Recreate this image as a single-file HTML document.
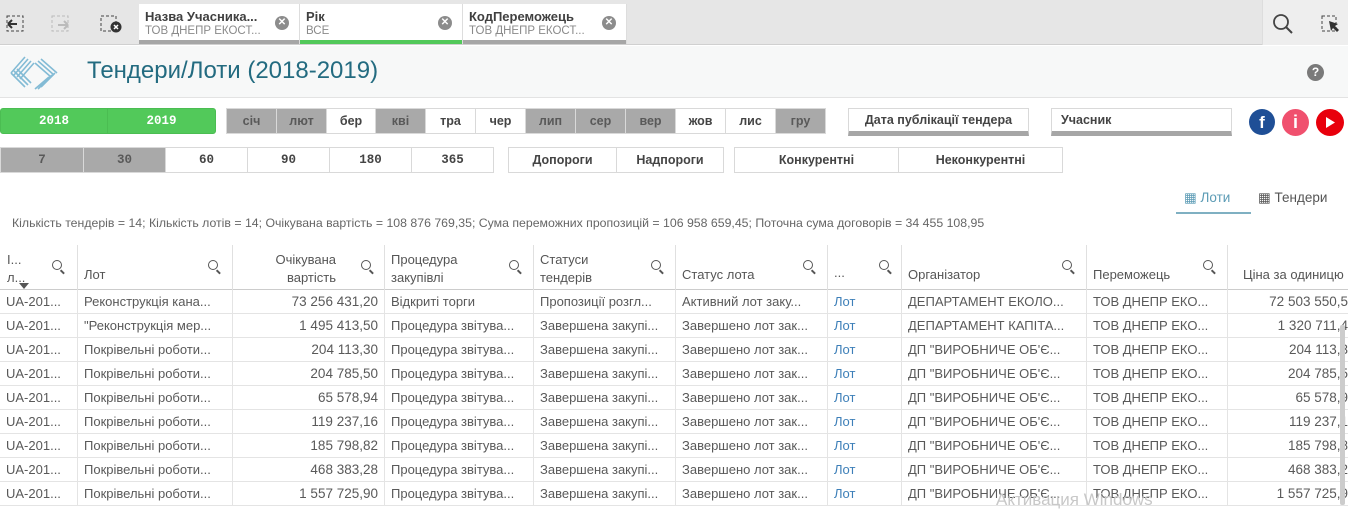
<!DOCTYPE html>
<html><head><meta charset="utf-8">
<style>
*{box-sizing:border-box;margin:0;padding:0}
body{width:1348px;height:505px;overflow:hidden;background:#fff;font-family:"Liberation Sans",sans-serif;color:#595959;position:relative}
.abs{position:absolute}
.top{left:0;top:0;width:1348px;height:45px;background:#e6e6e6;border-bottom:1px solid #d0d0d0}
.tab{top:4px;height:40px;background:#fff;border-right:1px solid #ddd;padding:5px 0 0 6px}
.tab b{display:block;font-size:13px;color:#404040}
.tab span{display:block;font-size:11.5px;color:#8a8a8a;margin-top:1px}
.tab .x{position:absolute;right:10px;top:12px;width:14px;height:14px;border-radius:50%;background:#8c8c8c;color:#fff;font-size:10px;line-height:14px;text-align:center;font-weight:bold}
.tab .bar{position:absolute;left:0;right:0;bottom:0;height:4px;background:#a6a6a6}
.titlebar{left:0;top:46px;width:1348px;height:52px;background:#f7f8f8;border-bottom:1px solid #e3e3e3}
.btn{position:absolute;font-size:12.5px;font-weight:bold;text-align:center;color:#444;border:1px solid #d9d9d9;background:#fff}
.g{background:#a9a9a9;color:#595959}
.grn{background:#52c95a;color:#fff;border-color:#4bbd52}
.mono{font-family:"Liberation Mono",monospace}
.hd{position:absolute;top:245px;height:45px;border-left:1px solid #e0e0e0;font-size:13px;color:#555}
.row{position:absolute;left:0;width:1348px;height:24px;border-bottom:1px solid #e4e4e4;font-size:13px}
.c{position:absolute;top:0;height:24px;line-height:23px;white-space:nowrap;overflow:hidden;padding-left:6px;border-left:1px solid #e4e4e4}
.r{text-align:right;padding-right:6px;font-size:13.5px}
.lnk{color:#3d7fb8}
.mag{position:absolute;width:10px;height:10px;border:1.6px solid #555;border-radius:50%}
.mag:after{content:"";position:absolute;width:5px;height:1.6px;background:#555;left:7px;top:10px;transform:rotate(45deg)}
</style></head><body>
<div class="abs top"></div>
<svg class="abs" style="left:5px;top:14px" width="22" height="20"><rect x="2" y="2" width="16" height="15" fill="none" stroke="#444" stroke-dasharray="3 2"/><path d="M3 10h9M3 10l4-4M3 10l4 4" stroke="#333" stroke-width="2" fill="none"/></svg>
<svg class="abs" style="left:50px;top:14px" width="22" height="20"><rect x="2" y="2" width="16" height="15" fill="none" stroke="#bbb" stroke-dasharray="3 2"/><path d="M8 11h10M18 11l-4-4M18 11l-4 4" stroke="#bbb" stroke-width="2" fill="none"/></svg>
<svg class="abs" style="left:99px;top:14px" width="24" height="20"><rect x="2" y="2" width="15" height="15" fill="none" stroke="#444" stroke-dasharray="3 2"/><circle cx="17" cy="13" r="5.5" fill="#333"/><path d="M15 11l4 4M19 11l-4 4" stroke="#fff" stroke-width="1.5"/></svg>
<div class="abs tab" style="left:139px;width:161px"><b>Назва Учасника...</b><span>ТОВ ДНЕПР ЕКОСТ...</span><div class="x">✕</div><div class="bar"></div></div>
<div class="abs tab" style="left:300px;width:163px"><b>Рік</b><span>ВСЕ</span><div class="x">✕</div><div class="bar" style="background:#52c95a"></div></div>
<div class="abs tab" style="left:463px;width:164px"><b>КодПереможець</b><span>ТОВ ДНЕПР ЕКОСТ...</span><div class="x">✕</div><div class="bar"></div></div>
<div class="abs" style="left:1262px;top:0;width:86px;height:45px;background:#eeeeee;border-left:1px solid #ddd"></div>
<svg class="abs" style="left:1272px;top:13px" width="22" height="22"><circle cx="9" cy="9" r="7" fill="none" stroke="#444" stroke-width="1.8"/><path d="M14 14l6 6" stroke="#444" stroke-width="2"/></svg>
<svg class="abs" style="left:1320px;top:14px" width="22" height="20"><rect x="2" y="2" width="14" height="15" fill="none" stroke="#444" stroke-dasharray="3 2"/><path d="M9 7l9 3-3 2 4 4-2 2-4-4-2 3z" fill="#333"/></svg>

<div class="abs titlebar"></div>
<svg class="abs" style="left:8px;top:53px" width="52" height="38">
<g stroke="#6fb1cf" stroke-width="1.6" fill="none" opacity=".85">
<path d="M3 20l14-16M6 22l14-16M9 24l14-16M12 26l14-16"/>
<path d="M3 20l14 14M6 18l14 14M9 16l14 14"/>
<path d="M30 8l16 14M33 6l16 14M27 10l16 14"/>
<path d="M44 22l-14 14M47 20l-14 14M41 24l-14 12"/></g></svg>
<div class="abs" style="left:87px;top:57px;font-size:24px;color:#236b80;font-family:'Liberation Sans',sans-serif">Тендери/Лоти (2018-2019)</div>
<div class="abs" style="left:1307px;top:64px;width:17px;height:17px;border-radius:50%;background:#7a7a7a;color:#fff;font-size:12px;font-weight:bold;text-align:center;line-height:17px">?</div>

<div class="btn grn mono" style="left:0;top:108px;width:108px;height:26px;line-height:24px;border-radius:3px 0 0 3px">2018</div>
<div class="btn grn mono" style="left:107px;top:108px;width:109px;height:26px;line-height:24px;border-radius:0 3px 3px 0">2019</div>
<div class="btn g" style="left:226px;top:108px;width:51px;height:26px;line-height:24px">січ</div>
<div class="btn g" style="left:276px;top:108px;width:51px;height:26px;line-height:24px">лют</div>
<div class="btn" style="left:326px;top:108px;width:50px;height:26px;line-height:24px">бер</div>
<div class="btn g" style="left:375px;top:108px;width:51px;height:26px;line-height:24px">кві</div>
<div class="btn" style="left:425px;top:108px;width:51px;height:26px;line-height:24px">тра</div>
<div class="btn" style="left:475px;top:108px;width:51px;height:26px;line-height:24px">чер</div>
<div class="btn g" style="left:525px;top:108px;width:51px;height:26px;line-height:24px">лип</div>
<div class="btn g" style="left:575px;top:108px;width:51px;height:26px;line-height:24px">сер</div>
<div class="btn g" style="left:625px;top:108px;width:51px;height:26px;line-height:24px">вер</div>
<div class="btn" style="left:675px;top:108px;width:51px;height:26px;line-height:24px">жов</div>
<div class="btn" style="left:725px;top:108px;width:51px;height:26px;line-height:24px">лис</div>
<div class="btn g" style="left:775px;top:108px;width:51px;height:26px;line-height:24px">гру</div>
<div class="btn" style="left:848px;top:108px;width:181px;height:28px;line-height:22px;border-bottom:5px solid #a6a6a6">Дата публікації тендера</div>
<div class="btn" style="left:1051px;top:108px;width:181px;height:28px;line-height:22px;text-align:left;padding-left:9px;border-bottom:5px solid #a6a6a6">Учасник</div>
<div class="abs" style="left:1249px;top:109px;width:26px;height:26px;border-radius:50%;background:#1f4f96;color:#fff;font-weight:bold;font-size:17px;text-align:center;line-height:27px">f</div>
<div class="abs" style="left:1282px;top:109px;width:27px;height:27px;border-radius:50%;background:#f0506e;color:#fff;font-weight:bold;font-size:18px;text-align:center;line-height:27px">i</div>
<div class="abs" style="left:1316px;top:109px;width:28px;height:27px;border-radius:50%;background:#e8000c"></div>
<svg class="abs" style="left:1325px;top:116px" width="12" height="13"><path d="M1 1l9 5.5-9 5.5z" fill="#fff"/></svg>

<div class="btn g mono" style="left:0;top:147px;width:84px;height:26px;line-height:24px">7</div>
<div class="btn g mono" style="left:83px;top:147px;width:83px;height:26px;line-height:24px">30</div>
<div class="btn mono" style="left:165px;top:147px;width:83px;height:26px;line-height:24px">60</div>
<div class="btn mono" style="left:247px;top:147px;width:83px;height:26px;line-height:24px">90</div>
<div class="btn mono" style="left:329px;top:147px;width:83px;height:26px;line-height:24px">180</div>
<div class="btn mono" style="left:411px;top:147px;width:83px;height:26px;line-height:24px">365</div>
<div class="btn" style="left:508px;top:147px;width:109px;height:26px;line-height:24px">Допороги</div>
<div class="btn" style="left:616px;top:147px;width:108px;height:26px;line-height:24px">Надпороги</div>
<div class="btn" style="left:734px;top:147px;width:165px;height:26px;line-height:24px">Конкурентні</div>
<div class="btn" style="left:898px;top:147px;width:165px;height:26px;line-height:24px">Неконкурентні</div>

<div class="abs" style="left:1176px;top:190px;width:75px;height:24px;border-bottom:2px solid #7fb0c2;font-size:13.5px;color:#5b9bb5;padding-left:8px">▦ Лоти</div>
<div class="abs" style="left:1258px;top:190px;font-size:13.5px;color:#555">▦ Тендери</div>
<div class="abs" style="left:12px;top:216px;font-size:12.3px;color:#666">Кількість тендерів = 14; Кількість лотів = 14; Очікувана вартість = 108 876 769,35; Сума переможних пропозицій = 106 958 659,45; Поточна сума договорів = 34 455 108,95</div>

<div class="abs" style="left:0;top:289px;width:1348px;height:1px;background:#ccc"></div>
<div class="hd" style="left:0;width:77px;border-left:none"><div style="position:absolute;left:7px;top:6px;line-height:18px">І...<br>л...</div><div class="mag" style="left:52px;top:15px"></div><div style="position:absolute;left:19px;top:38px;border:5px solid transparent;border-top:6px solid #555"></div></div>
<div class="hd" style="left:77px;width:155px"><div style="position:absolute;left:6px;top:22px">Лот</div><div class="mag" style="left:130px;top:15px"></div></div>
<div class="hd" style="left:232px;width:152px"><div style="position:absolute;right:48px;top:6px;line-height:18px;text-align:right">Очікувана<br>вартість</div><div class="mag" style="left:128px;top:15px"></div></div>
<div class="hd" style="left:384px;width:149px"><div style="position:absolute;left:6px;top:6px;line-height:18px">Процедура<br>закупівлі</div><div class="mag" style="left:124px;top:15px"></div></div>
<div class="hd" style="left:533px;width:142px"><div style="position:absolute;left:6px;top:6px;line-height:18px">Статуси<br>тендерів</div><div class="mag" style="left:117px;top:15px"></div></div>
<div class="hd" style="left:675px;width:152px"><div style="position:absolute;left:6px;top:22px">Статус лота</div><div class="mag" style="left:127px;top:15px"></div></div>
<div class="hd" style="left:827px;width:74px"><div style="position:absolute;left:6px;top:20px">...</div><div class="mag" style="left:51px;top:15px"></div></div>
<div class="hd" style="left:901px;width:185px"><div style="position:absolute;left:6px;top:22px">Організатор</div><div class="mag" style="left:160px;top:15px"></div></div>
<div class="hd" style="left:1086px;width:141px"><div style="position:absolute;left:6px;top:22px">Переможець</div><div class="mag" style="left:116px;top:15px"></div></div>
<div class="hd" style="left:1227px;width:121px"><div style="position:absolute;left:15px;top:22px;white-space:nowrap">Ціна за одиницю</div></div>

<div class="row" style="top:290px"><div class="c" style="left:0;width:77px;border:none">UA-201...</div><div class="c" style="left:77px;width:155px">Реконструкція кана...</div><div class="c r" style="left:232px;width:152px">73 256 431,20</div><div class="c" style="left:384px;width:149px">Відкриті торги</div><div class="c" style="left:533px;width:142px">Пропозиції розгл...</div><div class="c" style="left:675px;width:152px">Активний лот заку...</div><div class="c lnk" style="left:827px;width:74px">Лот</div><div class="c" style="left:901px;width:185px">ДЕПАРТАМЕНТ ЕКОЛО...</div><div class="c" style="left:1086px;width:141px">ТОВ ДНЕПР ЕКО...</div><div class="c r" style="left:1227px;width:121px;padding-right:0">72 503 550,5</div></div>
<div class="row" style="top:314px"><div class="c" style="left:0;width:77px;border:none">UA-201...</div><div class="c" style="left:77px;width:155px">"Реконструкція мер...</div><div class="c r" style="left:232px;width:152px">1 495 413,50</div><div class="c" style="left:384px;width:149px">Процедура звітува...</div><div class="c" style="left:533px;width:142px">Завершена закупі...</div><div class="c" style="left:675px;width:152px">Завершено лот зак...</div><div class="c lnk" style="left:827px;width:74px">Лот</div><div class="c" style="left:901px;width:185px">ДЕПАРТАМЕНТ КАПІТА...</div><div class="c" style="left:1086px;width:141px">ТОВ ДНЕПР ЕКО...</div><div class="c r" style="left:1227px;width:121px;padding-right:0">1 320 711,4</div></div>
<div class="row" style="top:338px"><div class="c" style="left:0;width:77px;border:none">UA-201...</div><div class="c" style="left:77px;width:155px">Покрівельні роботи...</div><div class="c r" style="left:232px;width:152px">204 113,30</div><div class="c" style="left:384px;width:149px">Процедура звітува...</div><div class="c" style="left:533px;width:142px">Завершена закупі...</div><div class="c" style="left:675px;width:152px">Завершено лот зак...</div><div class="c lnk" style="left:827px;width:74px">Лот</div><div class="c" style="left:901px;width:185px">ДП "ВИРОБНИЧЕ ОБ'Є...</div><div class="c" style="left:1086px;width:141px">ТОВ ДНЕПР ЕКО...</div><div class="c r" style="left:1227px;width:121px;padding-right:0">204 113,3</div></div>
<div class="row" style="top:362px"><div class="c" style="left:0;width:77px;border:none">UA-201...</div><div class="c" style="left:77px;width:155px">Покрівельні роботи...</div><div class="c r" style="left:232px;width:152px">204 785,50</div><div class="c" style="left:384px;width:149px">Процедура звітува...</div><div class="c" style="left:533px;width:142px">Завершена закупі...</div><div class="c" style="left:675px;width:152px">Завершено лот зак...</div><div class="c lnk" style="left:827px;width:74px">Лот</div><div class="c" style="left:901px;width:185px">ДП "ВИРОБНИЧЕ ОБ'Є...</div><div class="c" style="left:1086px;width:141px">ТОВ ДНЕПР ЕКО...</div><div class="c r" style="left:1227px;width:121px;padding-right:0">204 785,5</div></div>
<div class="row" style="top:386px"><div class="c" style="left:0;width:77px;border:none">UA-201...</div><div class="c" style="left:77px;width:155px">Покрівельні роботи...</div><div class="c r" style="left:232px;width:152px">65 578,94</div><div class="c" style="left:384px;width:149px">Процедура звітува...</div><div class="c" style="left:533px;width:142px">Завершена закупі...</div><div class="c" style="left:675px;width:152px">Завершено лот зак...</div><div class="c lnk" style="left:827px;width:74px">Лот</div><div class="c" style="left:901px;width:185px">ДП "ВИРОБНИЧЕ ОБ'Є...</div><div class="c" style="left:1086px;width:141px">ТОВ ДНЕПР ЕКО...</div><div class="c r" style="left:1227px;width:121px;padding-right:0">65 578,9</div></div>
<div class="row" style="top:410px"><div class="c" style="left:0;width:77px;border:none">UA-201...</div><div class="c" style="left:77px;width:155px">Покрівельні роботи...</div><div class="c r" style="left:232px;width:152px">119 237,16</div><div class="c" style="left:384px;width:149px">Процедура звітува...</div><div class="c" style="left:533px;width:142px">Завершена закупі...</div><div class="c" style="left:675px;width:152px">Завершено лот зак...</div><div class="c lnk" style="left:827px;width:74px">Лот</div><div class="c" style="left:901px;width:185px">ДП "ВИРОБНИЧЕ ОБ'Є...</div><div class="c" style="left:1086px;width:141px">ТОВ ДНЕПР ЕКО...</div><div class="c r" style="left:1227px;width:121px;padding-right:0">119 237,1</div></div>
<div class="row" style="top:434px"><div class="c" style="left:0;width:77px;border:none">UA-201...</div><div class="c" style="left:77px;width:155px">Покрівельні роботи...</div><div class="c r" style="left:232px;width:152px">185 798,82</div><div class="c" style="left:384px;width:149px">Процедура звітува...</div><div class="c" style="left:533px;width:142px">Завершена закупі...</div><div class="c" style="left:675px;width:152px">Завершено лот зак...</div><div class="c lnk" style="left:827px;width:74px">Лот</div><div class="c" style="left:901px;width:185px">ДП "ВИРОБНИЧЕ ОБ'Є...</div><div class="c" style="left:1086px;width:141px">ТОВ ДНЕПР ЕКО...</div><div class="c r" style="left:1227px;width:121px;padding-right:0">185 798,8</div></div>
<div class="row" style="top:458px"><div class="c" style="left:0;width:77px;border:none">UA-201...</div><div class="c" style="left:77px;width:155px">Покрівельні роботи...</div><div class="c r" style="left:232px;width:152px">468 383,28</div><div class="c" style="left:384px;width:149px">Процедура звітува...</div><div class="c" style="left:533px;width:142px">Завершена закупі...</div><div class="c" style="left:675px;width:152px">Завершено лот зак...</div><div class="c lnk" style="left:827px;width:74px">Лот</div><div class="c" style="left:901px;width:185px">ДП "ВИРОБНИЧЕ ОБ'Є...</div><div class="c" style="left:1086px;width:141px">ТОВ ДНЕПР ЕКО...</div><div class="c r" style="left:1227px;width:121px;padding-right:0">468 383,2</div></div>
<div class="row" style="top:482px"><div class="c" style="left:0;width:77px;border:none">UA-201...</div><div class="c" style="left:77px;width:155px">Покрівельні роботи...</div><div class="c r" style="left:232px;width:152px">1 557 725,90</div><div class="c" style="left:384px;width:149px">Процедура звітува...</div><div class="c" style="left:533px;width:142px">Завершена закупі...</div><div class="c" style="left:675px;width:152px">Завершено лот зак...</div><div class="c lnk" style="left:827px;width:74px">Лот</div><div class="c" style="left:901px;width:185px">ДП "ВИРОБНИЧЕ ОБ'Є...</div><div class="c" style="left:1086px;width:141px">ТОВ ДНЕПР ЕКО...</div><div class="c r" style="left:1227px;width:121px;padding-right:0">1 557 725,9</div></div>
<div class="abs" style="left:1340px;top:325px;width:5px;height:180px;background:#ccc;border-radius:2px"></div>
<div class="abs" style="left:996px;top:490px;font-size:17px;color:#c8c8c8">Активация Windows</div>
</body></html>
